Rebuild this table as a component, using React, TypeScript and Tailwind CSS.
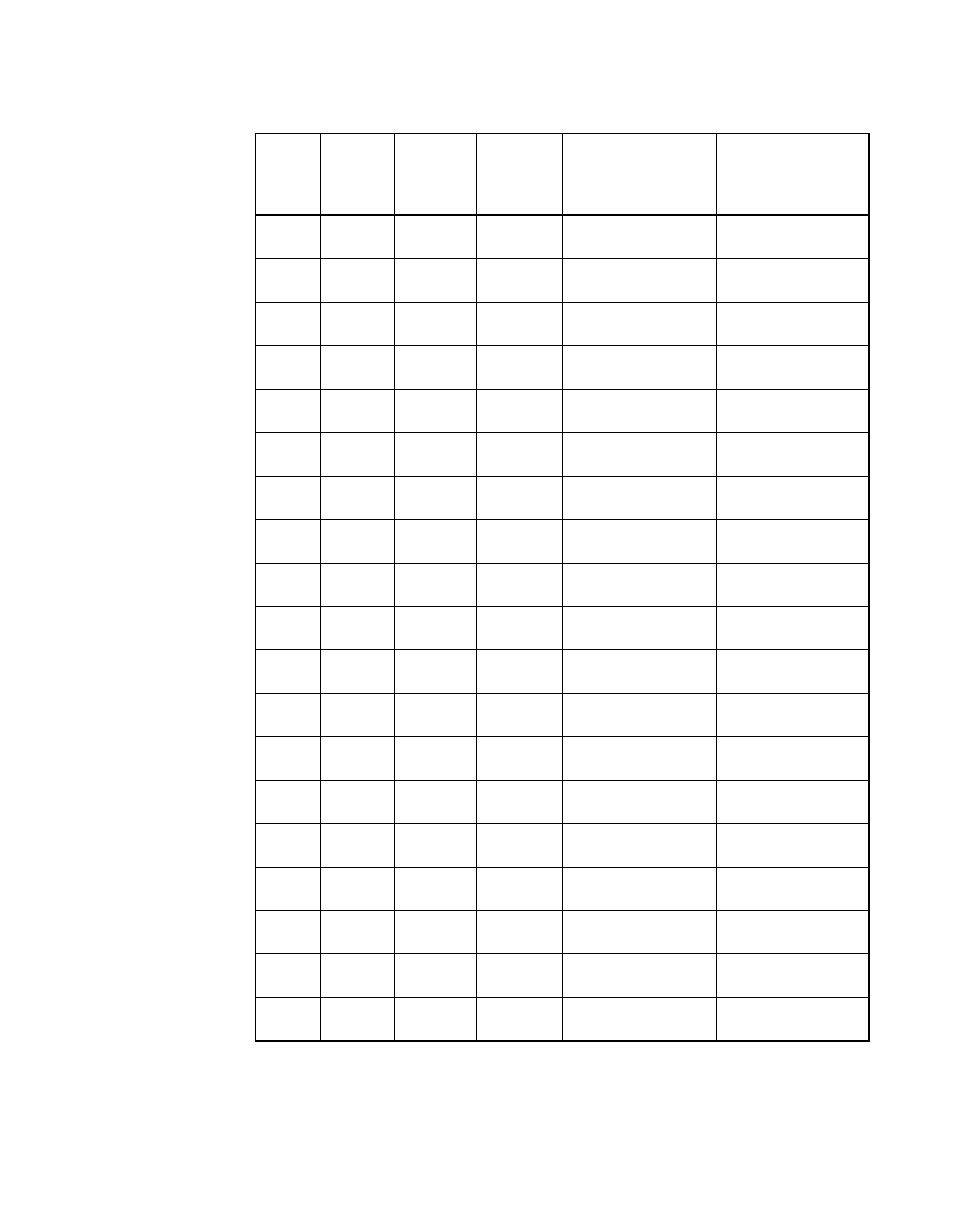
const cols = ['w-[65px]', 'w-[74px]', 'w-[82px]', 'w-[86px]', 'w-[154px]', 'w-[151px]'];
const rows = Array.from({ length: 19 }, (_, i) => i);

function Row({ height }: { height: string }) {
  return (
    <div className={`flex ${height}`}>
      {cols.map((w, i) => (
        <div key={i} className={`${w} shrink-0 ${i < cols.length - 1 ? 'border-r border-black' : ''}`} />
      ))}
    </div>
  );
}

export default function App() {
  return (
    <div className="min-h-[1227px] w-[954px] bg-white pt-[133px] pl-[255px]">
      <div className="w-[615px] border-t border-l border-r-2 border-b-2 border-black">
        <div className="border-b-2 border-black">
          <Row height="h-[80px]" />
        </div>
        {rows.map((r) => (
          <div key={r} className={r < rows.length - 1 ? 'border-b border-black' : ''}>
            <Row height="h-[42.45px]" />
          </div>
        ))}
      </div>
    </div>
  );
}
